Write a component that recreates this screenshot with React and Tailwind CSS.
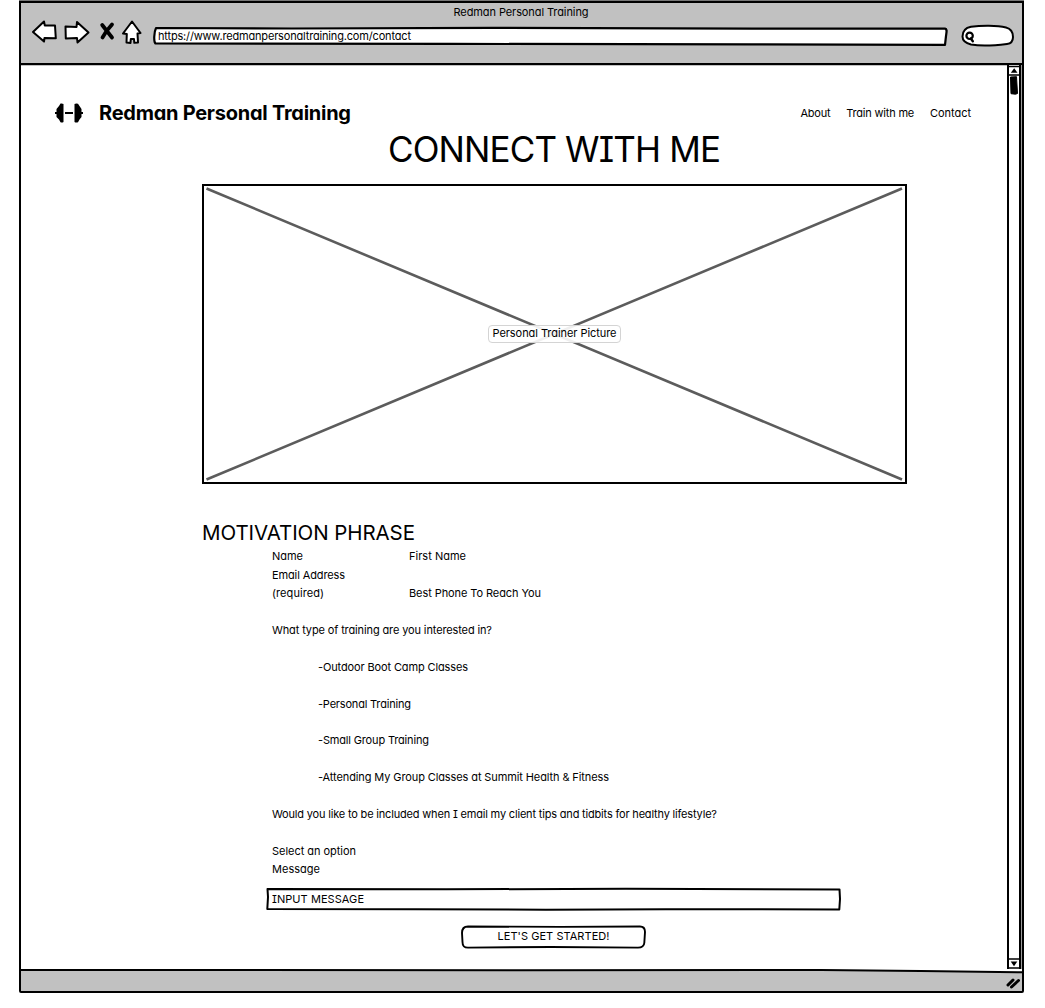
import { useLayoutEffect, useRef, useState } from "react";

// Single line of text whose tracking is tuned so that it spans `w` pixels.
function Line({ w, className = "", children }) {
  const ref = useRef(null);
  const [spacing, setSpacing] = useState(0);
  useLayoutEffect(() => {
    const natural = ref.current.getBoundingClientRect().width;
    setSpacing((w - natural) / (children.length - 1));
  }, []);
  return (
    <span className={`block whitespace-nowrap ${className}`}>
      <span ref={ref} style={{ letterSpacing: spacing }}>
        {children}
      </span>
    </span>
  );
}

function Arrow({ flip }) {
  return (
    <svg width="27" height="24" viewBox="0 0 27 24" className="block shrink-0">
      <path
        d={
          flip
            ? "M2.5 6.5 L13.5 7 L14 2 L25.5 12.5 L14.5 22.5 L14 18 L2.8 18.4 Z"
            : "M2 12 L13 1.5 L13.8 5.5 L24 5.5 L24.8 18.2 L13.5 18 L13 21.5 Z"
        }
        fill="white"
        stroke="black"
        strokeWidth="2"
        strokeLinejoin="round"
      />
    </svg>
  );
}

function TitleBar() {
  return (
    <header className="h-[63px] shrink-0 bg-[#c1c1c1]">
      <div className="flex h-[21px] justify-center pr-[1px] leading-[18px]">
        <Line w={135}>Redman Personal Training</Line>
      </div>
      <div className="flex">
        <div className="-mt-1 flex h-[26px] w-[131px] shrink-0 pl-[10px]">
          <Arrow />
          <span className="w-[5px]" />
          <Arrow flip />
          <svg width="18" height="22" viewBox="0 0 18 22" className="ml-[8px] shrink-0">
            <path d="M4.2 5 L8.5 10.5 L14 17.5 M14 4.5 L8.5 11 L4.5 17.5" stroke="black" strokeWidth="3.8" strokeLinecap="round" fill="none" />
          </svg>
          <svg width="20" height="25" viewBox="0 0 20 25" className="ml-[6px] shrink-0">
            <path
              d="M10 1.5 L18.5 13 L15.5 13.5 L16 22.5 L12.3 22.8 L12 19 L8.8 19 L8.5 23 L4.5 22.5 L4.8 14 L1 13.5 Z"
              fill="white"
              stroke="black"
              strokeWidth="2"
              strokeLinejoin="round"
            />
          </svg>
        </div>
        <div className="relative h-[22px] w-[797px] shrink-0 pl-[6px] leading-5">
          <svg width="797" height="22" viewBox="0 0 797 22" className="absolute top-0 left-0">
            <path
              d="M4 4 L140 4.5 L340 3.8 L600 4.6 L793 4.6 C795.5 5 794.5 8 794 12 L793 20.8 L600 20.3 L300 19.9 L3.5 19.5 C1.5 18 2 8 4 4 Z"
              fill="white"
              stroke="black"
              strokeWidth="2.2"
              strokeLinejoin="round"
            />
          </svg>
          <Line w={253} className="relative pt-[2px]">https://www.redmanpersonaltraining.com/contact</Line>
        </div>
        <svg width="54" height="24" viewBox="0 0 54 24" className="ml-[12px] shrink-0">
          <path
            d="M10 2.8 C20 1.5 36 1.3 45 3.5 C51 5 52 9 52 13 C52 17 50 19.5 46 20 C34 21.5 18 22 10 20.5 C4 19 1.5 16 1.5 12.5 C1.5 8 4 4 10 2.8 Z"
            fill="white"
            stroke="black"
            strokeWidth="2"
          />
          <circle cx="8.6" cy="11.8" r="3.2" fill="white" stroke="black" strokeWidth="2.2" />
          <path d="M9.8 14.5 L11.8 17.2" stroke="black" strokeWidth="2.4" strokeLinecap="round" />
        </svg>
      </div>
    </header>
  );
}

function SiteHeader() {
  return (
    <div className="flex h-6 items-center pl-[34px] pr-[36px]">
      <svg width="28" height="20" viewBox="0 0 28 20">
        <path d="M0 10 h4 M10 10 h8 M24 10 h4" stroke="black" strokeWidth="2.2" />
        <path d="M1.5 6 L4 3 L5.5 0.6 Q7 0 8.5 1 V19 Q7 20 5.5 19.2 L4 16.5 L1.5 14 Z" />
        <path d="M26.5 6 L24.5 3 L23 0.8 Q21 0 19.5 1 V19 Q21 20 23 19.2 L24.5 16.5 L26.5 14 Z" />
      </svg>
      <Line w={252} className="ml-4 text-[20px] font-bold">Redman Personal Training</Line>
      <nav className="ml-auto flex gap-4">
        <Line w={30}>About</Line>
        <Line w={68}>Train with me</Line>
        <Line w={41}>Contact</Line>
      </nav>
    </div>
  );
}

function Picture() {
  return (
    <div className="relative mt-[13px] ml-[181px] flex h-[300px] w-[705px] items-center justify-center border-2 border-black">
      <svg width="701" height="296" viewBox="0 0 701 296" className="absolute top-0 left-0">
        <path d="M2.5 2.5 L698 293.5 M698 2.5 L2.5 293.5" stroke="#5c5c5c" strokeWidth="2.6" />
      </svg>
      <div className="relative -mt-px flex h-[18px] w-[133px] items-center justify-center rounded-[4px] border border-[#d4d4d4] bg-white/90">
        <Line w={124}>Personal Trainer Picture</Line>
      </div>
    </div>
  );
}

function ContactForm() {
  return (
    <div className="ml-[251px] pt-[0.4px] leading-[18.4px]">
      <div className="flex">
        <Line w={31} className="w-[137px]">Name</Line>
        <Line w={57}>First Name</Line>
      </div>
      <Line w={73}>Email Address</Line>
      <div className="flex">
        <Line w={52} className="w-[137px]">(required)</Line>
        <Line w={132}>Best Phone To Reach You</Line>
      </div>
      <Line w={220} className="mt-[18.4px]">What type of training are you interested in?</Line>
      <div className="flex flex-col gap-[18.4px] py-[18.4px] pl-[46px]">
        <Line w={150}>-Outdoor Boot Camp Classes</Line>
        <Line w={93}>-Personal Training</Line>
        <Line w={111}>-Small Group Training</Line>
        <Line w={291}>-Attending My Group Classes at Summit Health &amp; Fitness</Line>
      </div>
      <Line w={445}>Would you like to be included when I email my client tips and tidbits for healthy lifestyle?</Line>
      <Line w={84} className="mt-[18.4px]">Select an option</Line>
      <Line w={48}>Message</Line>
    </div>
  );
}

function Controls() {
  return (
    <>
      <div className="relative mt-[8.6px] ml-[245px] h-6 w-[575px] pl-[6px] leading-6">
        <svg width="575" height="24" viewBox="0 0 575 24" className="absolute top-0 left-0">
          <path
            d="M1.5 2 L180 2.3 L360 1.8 L573.5 2.4 L574 12 L573.3 22.5 L400 22.2 L280 22.7 L150 22.2 L1.3 22 L2 10 Z"
            fill="white"
            stroke="black"
            strokeWidth="2"
            strokeLinejoin="round"
          />
        </svg>
        <Line w={92} className="relative">INPUT MESSAGE</Line>
      </div>
      <button className="relative mt-[14px] ml-[440px] flex h-6 w-[185px] justify-center leading-[22px]">
        <svg width="185" height="24" viewBox="0 0 185 24" className="absolute top-0 left-0">
          <path
            d="M7 1.5 L100 1.9 L179 1.5 C183 1.5 184 3.5 184 7 L183.3 18 C183 21.5 181 22.6 177 22.6 L90 22 L7 22.6 C3 22.6 1.5 21 1.5 17 L1 8 C1 4 3 1.5 7 1.5 Z"
            fill="white"
            stroke="black"
            strokeWidth="1.9"
          />
        </svg>
        <Line w={112} className="relative">LET'S GET STARTED!</Line>
      </button>
    </>
  );
}

function ScrollBar() {
  return (
    <div className="flex h-full shrink-0 border-r border-[#9a9a9a]">
      <div className="flex w-[14px] flex-col items-center border-x-2 border-black bg-white">
        <svg width="10" height="11" viewBox="0 0 10 11" className="block">
          <path d="M0 1.5 H10 M0 10 H10" stroke="black" strokeWidth="1.6" />
          <path d="M5.2 3.2 L8.5 7.8 H1.8 Z" />
        </svg>
        <svg width="10" height="20" viewBox="0 0 10 20" className="block">
          <path d="M1.5 1 L7.5 0.7 L8.5 17.5 L6.5 18.2 L2 17.7 Z" stroke="black" strokeLinejoin="round" />
        </svg>
        <svg width="10" height="11" viewBox="0 0 10 11" className="mt-auto block">
          <path d="M0 1 H10 M0 10 H10" stroke="black" strokeWidth="1.6" />
          <path d="M1.7 3.6 H8.3 L5 8.2 Z" />
        </svg>
      </div>
    </div>
  );
}

export default function App() {
  return (
    <div className="h-[1008px] w-[1045px] overflow-hidden bg-white pl-[19px] font-['Inter',sans-serif] text-[11px] text-black [font-feature-settings:'cv11','cv08']">
      <div className="h-px w-[1005px] bg-[#777777]" />
      <div className="flex h-[992px] w-[1005px] flex-col rounded-b-[2px] border-2 border-black">
        <TitleBar />
        <div className="-mt-[3px] h-[2px] shrink-0 bg-black" />
        <div className="flex h-[904px] shrink-0">
          <main className="min-w-0 flex-1 pt-9">
            <SiteHeader />
            <h1 className="mt-[2px] flex h-[44px] justify-center pl-[80px] text-[35px] leading-[44px]">
              <Line w={333}>CONNECT WITH ME</Line>
            </h1>
            <Picture />
            <h2 className="mt-[35px] ml-[181px] h-[28px] text-[20.5px] leading-[27px] [font-feature-settings:'cv11']">
              <Line w={213}>MOTIVATION PHRASE</Line>
            </h2>
            <ContactForm />
            <Controls />
          </main>
          <ScrollBar />
        </div>
        <footer className="h-[22px] shrink-0 bg-white">
          <svg width="1001" height="22" viewBox="0 0 1001 22" className="block">
            <path d="M0 1 L500 1.2 L800 1 L900 2 L1001 3.2 V22 H0 Z" fill="#c1c1c1" />
            <path d="M0 1 L500 1.2 L800 1 L900 2 L1001 3.2" stroke="black" strokeWidth="2" fill="none" />
            <path d="M987 16 L992 11 M990.5 18 L997.5 11.5" stroke="black" strokeWidth="3" strokeLinecap="round" />
          </svg>
        </footer>
      </div>
    </div>
  );
}
